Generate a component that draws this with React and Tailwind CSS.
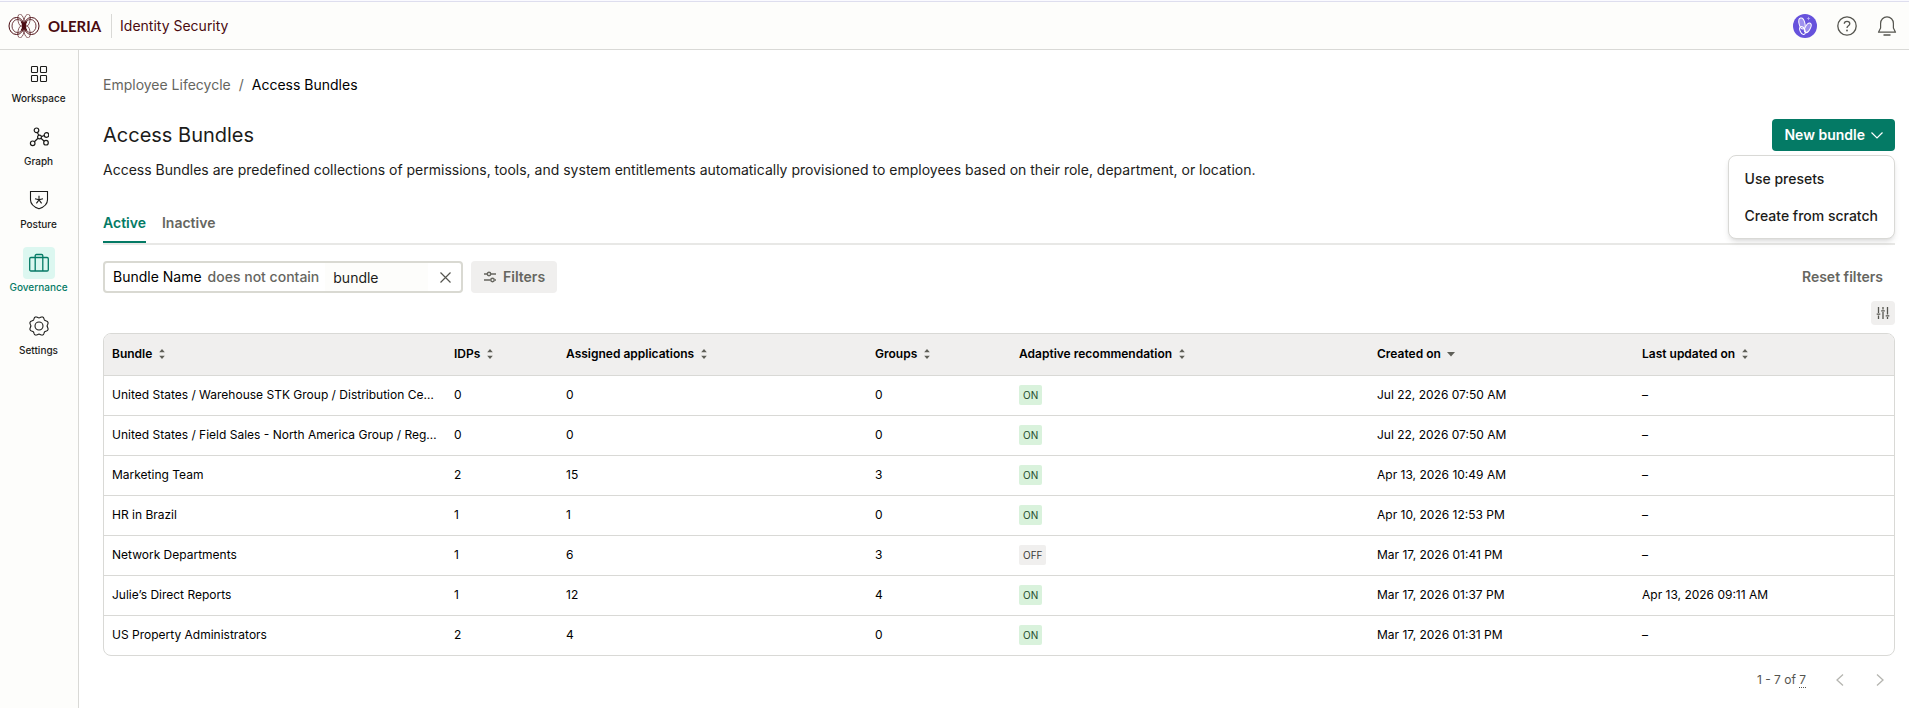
import React, { useState } from 'react';

const navItems = [
  { name: 'Workspace', icon: WorkspaceIcon },
  { name: 'Graph', icon: GraphIcon },
  { name: 'Posture', icon: PostureIcon },
  { name: 'Governance', icon: GovernanceIcon },
  { name: 'Settings', icon: SettingsIcon },
];

const columns = [
  { label: 'Bundle', width: 'w-[342px]' },
  { label: 'IDPs', width: 'w-[112px]' },
  { label: 'Assigned applications', width: 'w-[309px]' },
  { label: 'Groups', width: 'w-[144px]' },
  { label: 'Adaptive recommendation', width: 'w-[358px]' },
  { label: 'Created on', width: 'w-[265px]', sorted: true },
  { label: 'Last updated on', width: 'w-[260px]' },
];

const bundles = [
  { id: 1, name: 'United States / Warehouse STK Group / Distribution Ce…', idps: 0, apps: 0, groups: 0, adaptive: true, created: 'Jul 22, 2026 07:50 AM' },
  { id: 2, name: 'United States / Field Sales - North America Group / Reg…', idps: 0, apps: 0, groups: 0, adaptive: true, created: 'Jul 22, 2026 07:50 AM' },
  { id: 3, name: 'Marketing Team', idps: 2, apps: 15, groups: 3, adaptive: true, created: 'Apr 13, 2026 10:49 AM' },
  { id: 4, name: 'HR in Brazil', idps: 1, apps: 1, groups: 0, adaptive: true, created: 'Apr 10, 2026 12:53 PM' },
  { id: 5, name: 'Network Departments', idps: 1, apps: 6, groups: 3, adaptive: false, created: 'Mar 17, 2026 01:41 PM' },
  { id: 6, name: 'Julie’s Direct Reports', idps: 1, apps: 12, groups: 4, adaptive: true, created: 'Mar 17, 2026 01:37 PM', updated: 'Apr 13, 2026 09:11 AM' },
  { id: 7, name: 'US Property Administrators', idps: 2, apps: 4, groups: 0, adaptive: true, created: 'Mar 17, 2026 01:31 PM' },
];

// Gear outline with eight soft teeth
const gearPoints = Array.from({ length: 96 }, (_, i) => {
  const angle = (i / 96) * Math.PI * 2;
  const radius = 8.9 - 0.8 * Math.cos(angle * 8);
  return `${(10 + radius * Math.cos(angle)).toFixed(2)},${(10 + radius * Math.sin(angle)).toFixed(2)}`;
}).join(' ');

function WorkspaceIcon() {
  return (
    <svg className="h-5 w-5" viewBox="0 0 20 20" fill="none" stroke="currentColor" strokeWidth="1.1">
      <rect x="2.5" y="2.5" width="6" height="6" rx="0.8" />
      <rect x="11.5" y="2.5" width="6" height="6" rx="0.8" />
      <rect x="2.5" y="11.5" width="6" height="6" rx="0.8" />
      <rect x="11.5" y="11.5" width="6" height="6" rx="0.8" />
    </svg>
  );
}

function GraphIcon() {
  return (
    <svg className="h-5 w-5" viewBox="0 0 20 20" fill="none" stroke="currentColor" strokeWidth="1.2">
      <circle cx="7.5" cy="3.3" r="2.3" />
      <circle cx="17.5" cy="8" r="2.3" />
      <circle cx="17" cy="15.7" r="2.3" />
      <circle cx="3.7" cy="16.3" r="2.3" />
      <circle cx="10.5" cy="10" r="1.9" />
      <path d="M8.3 5.5l1.5 2.8M12.4 9.6l2.9-1.1M12 11.3l3.2 2.9M9 11.3l-3.6 3.4" />
    </svg>
  );
}

function PostureIcon() {
  return (
    <svg className="h-5 w-5" viewBox="0 0 20 20" fill="none" stroke="currentColor" strokeWidth="1.1">
      <path d="M1.5 1.5h17v8.3c0 4.2-3.5 7.3-8.5 9-5-1.7-8.5-4.8-8.5-9z" />
      <path d="M10 9.8V5.8M10 9.8l-4-1.1M10 9.8l4-1.1M10 9.8l-2.6 3.5M10 9.8l2.6 3.5" />
    </svg>
  );
}

function GovernanceIcon() {
  return (
    <svg className="h-5 w-5" viewBox="0 0 20 20" fill="none" stroke="currentColor" strokeWidth="1.3">
      <rect x="0.7" y="4.5" width="18.6" height="13.5" rx="1.2" />
      <path d="M6.2 18V2.7c0-.7.5-1.2 1.2-1.2h5.2c.7 0 1.2.5 1.2 1.2V18" />
    </svg>
  );
}

function SettingsIcon() {
  return (
    <svg className="h-5 w-5" viewBox="0 0 20 20" fill="none" stroke="currentColor" strokeWidth="1.1" strokeLinejoin="round">
      <circle cx="10" cy="10" r="4" />
      <polygon points={gearPoints} />
    </svg>
  );
}

const ButterflyLogo = () => (
  <svg className="h-6 w-8" viewBox="0 0 32 24" fill="none" stroke="#4a0a10" strokeWidth="1">
    <ellipse cx="8.5" cy="12" rx="7.5" ry="8.5" />
    <ellipse cx="23.500" cy="12" rx="7.5" ry="8.5" />
    <ellipse cx="9.5" cy="12" rx="5.5" ry="6.5" strokeWidth="0.8" />
    <ellipse cx="22.5" cy="12" rx="5.5" ry="6.5" strokeWidth="0.8" />
    <ellipse cx="13" cy="6.5" rx="3" ry="6.5" transform="rotate(-12 13 6.500)" strokeWidth="0.6" />
    <ellipse cx="19" cy="6.5" rx="3" ry="6.5" transform="rotate(12 19 6.500)" strokeWidth="0.6" />
    <ellipse cx="13" cy="17.5" rx="3" ry="6.5" transform="rotate(12 13 17.500)" strokeWidth="0.6" />
    <ellipse cx="19" cy="17.5" rx="3" ry="6.5" transform="rotate(-12 19 17.500)" strokeWidth="0.6" />
    <path d="M13.5 7.5c2 3 2 6 0 9M18.5 7.5c-2 3-2 6 0 9M16 8.5v7" strokeWidth="1.6" />
  </svg>
);

const AssistantIcon = () => (
  <svg className="h-6 w-6" viewBox="0 0 24 24" fill="none" stroke="#fff" strokeWidth="1">
    <circle cx="12" cy="12" r="12" fill="#6652dc" stroke="none" />
    <ellipse cx="9" cy="9.5" rx="2.9" ry="5.7" transform="rotate(-14 9 9.5)" fill="#9d90ee" />
    <ellipse cx="14.8" cy="13.8" rx="2.5" ry="5.2" transform="rotate(28 14.8 13.8)" fill="#9d90ee" />
    <ellipse cx="9.5" cy="16.5" rx="2.4" ry="4.2" transform="rotate(-24 9.5 16.5)" />
    <path d="M15.5 2.5l.6 1.4 1.4.6-1.4.6-.6 1.4-.6-1.4-1.4-.6 1.4-.6z" fill="#bdb3f5" stroke="none" />
  </svg>
);

const HelpIcon = () => (
  <svg className="h-5 w-5" viewBox="0 0 20 20" fill="none" stroke="currentColor" strokeWidth="1.3">
    <circle cx="10" cy="10" r="9.2" />
    <path d="M7.3 7.8c0-1.5 1.1-2.5 2.7-2.5s2.8 1 2.8 2.4c0 2-2.8 2-2.8 4.2" />
    <circle cx="10" cy="14.5" r="0.9" fill="currentColor" stroke="none" />
  </svg>
);

const BellIcon = () => (
  <svg className="h-5 w-5" viewBox="0 0 20 20" fill="none" stroke="currentColor" strokeWidth="1.2">
    <path d="M1.5 16.2 3.6 12V7.5C3.6 3.7 6.4.9 10 .9s6.4 2.8 6.4 6.6V12l2.1 4.2z" strokeLinejoin="round" />
    <path d="M6.5 19h7" strokeWidth="1.5" />
  </svg>
);

const SortIcon = ({ sorted }) =>
  sorted ? (
    <svg className="h-3 w-2" viewBox="0 0 8 12" fill="#5f5f58">
      <path d="M0 4h8L4 8.5z" />
    </svg>
  ) : (
    <svg className="h-3 w-2" viewBox="0 0 8 12" fill="#5f5f58">
      <path d="M4 1l2.8 3.2H1.2zM4 11l2.8-3.2H1.2z" />
    </svg>
  );

const Header = () => (
  <header className="flex h-12 items-center justify-between border-b border-[#d9d9d6] bg-[#fdfdfb] pl-2 pr-3">
    <div className="flex items-center">
      <a href="#" className="flex items-center gap-2 text-[#4a0a10]">
        <ButterflyLogo />
        <span className="font-['Lato'] text-[15px] font-bold leading-5">OLERIA</span>
      </a>
      <span className="ml-[10px] h-6 border-l border-[#d9d9d6]" />
      <span className="ml-2 text-[14px] leading-5 text-[#4a0a10]">Identity Security</span>
    </div>
    <div className="flex items-center gap-5 text-[#55554f]">
      <button aria-label="Assistant"><AssistantIcon /></button>
      <button aria-label="Help"><HelpIcon /></button>
      <button aria-label="Notifications"><BellIcon /></button>
    </div>
  </header>
);

const Sidebar = () => (
  <nav className="flex w-[79px] shrink-0 flex-col gap-[15px] border-r border-[#d9d9d6] bg-[#fdfdfb] pr-px pt-2">
    {navItems.map(({ name, icon: Icon }) => {
      const active = name === 'Governance';
      return (
        <a key={name} href="#" className={`flex flex-col items-center text-[10px] font-medium leading-4 ${active ? 'text-[#047a65]' : 'text-[#1c1c1a]'}`}>
          <span className={`flex h-8 w-8 items-center justify-center rounded ${active ? 'bg-[#dcf7f0]' : ''}`}>
            <Icon />
          </span>
          {name}
        </a>
      );
    })}
  </nav>
);

const NewBundleMenu = () => {
  const [open, setOpen] = useState(true);
  return (
    <div className="relative">
      <button
        onClick={() => setOpen(!open)}
        className="flex h-8 items-center gap-[6px] rounded bg-[#047a65] px-3 text-[14px] font-semibold leading-5 text-white"
      >
        New bundle
        <svg className="h-3 w-3" viewBox="0 0 12 12" fill="none" stroke="currentColor" strokeWidth="1.2">
          <path d="M.5 3.5 6 9l5.5-5.5" />
        </svg>
      </button>
      {open && (
        <div className="absolute right-0 top-9 z-10 flex flex-col rounded-lg border border-[#d9d9d6] bg-white py-1 shadow-md">
          <button className="h-[37px] whitespace-nowrap px-4 text-left text-[14px] font-medium leading-5">Use presets</button>
          <button className="h-[37px] whitespace-nowrap px-4 text-left text-[14px] font-medium leading-5">Create from scratch</button>
        </div>
      )}
    </div>
  );
};

const FilterBar = () => {
  const [value, setValue] = useState('bundle');
  return (
    <div className="mt-4 flex items-center justify-between">
      <div className="flex gap-2">
        <div className="flex h-8 w-[360px] items-center rounded border-2 border-[#d9d9d2] pl-2 text-[14px] leading-5">
          <label htmlFor="bundle-name" className="shrink-0 text-black">Bundle Name</label>
          <span className="ml-[6px] shrink-0 font-medium text-[#66665f]">does not contain</span>
          <input
            id="bundle-name"
            value={value}
            onChange={(e) => setValue(e.target.value)}
            className="ml-[6px] h-full min-w-0 flex-1 bg-[#fdfdfb] px-2 outline-none"
          />
          <button aria-label="Remove filter" onClick={() => setValue('')} className="pl-3 pr-[10px] text-[#55554f]">
            <svg className="h-[11px] w-[11px]" viewBox="0 0 11 11" fill="none" stroke="currentColor" strokeWidth="1.2">
              <path d="M.5.5l10 10M10.5.5l-10 10" />
            </svg>
          </button>
        </div>
        <button className="flex h-8 items-center gap-[6px] rounded bg-[#f0efee] px-3 text-[14px] font-semibold leading-5 text-[#66665f]">
          <svg className="h-3 w-[14px]" viewBox="0 0 14 12" fill="none" stroke="currentColor" strokeWidth="1.4">
            <path d="M1 3h3M8 3h5M1 9h6.500M11.500 9H13" />
            <circle cx="6" cy="3" r="1.7" />
            <circle cx="9.5" cy="9" r="1.7" />
          </svg>
          Filters
        </button>
      </div>
      <button className="px-3 text-[14px] font-semibold leading-5 text-[#66665f]">Reset filters</button>
    </div>
  );
};

const BundleTable = () => (
  <div className="mt-2 overflow-hidden rounded-lg border border-[#d9d9d6]">
    <table className="w-full table-fixed text-left text-[12px] leading-4 text-black">
      <thead>
        <tr className="h-[41px] border-b border-[#d9d9d6] bg-[#f0efee]">
          {columns.map((column) => (
            <th key={column.label} className={`px-2 py-0 font-semibold ${column.width}`}>
              <button className="flex items-center gap-[6px] whitespace-nowrap">
                {column.label}
                <SortIcon sorted={column.sorted} />
              </button>
            </th>
          ))}
        </tr>
      </thead>
      <tbody>
        {bundles.map((bundle) => (
          <tr key={bundle.id} className="h-10 border-b border-[#d9d9d6] last:border-b-0">
            <td className="whitespace-nowrap py-0 pl-2">{bundle.name}</td>
            <td className="px-2 py-0">{bundle.idps}</td>
            <td className="px-2 py-0">{bundle.apps}</td>
            <td className="px-2 py-0">{bundle.groups}</td>
            <td className="px-2 py-0">
              <span className={`inline-block rounded-xs px-1 text-[10px] leading-5 ${bundle.adaptive ? 'bg-[#d9f2dc] text-[#234a2b]' : 'bg-[#f0efee] text-[#3a3a36]'}`}>
                {bundle.adaptive ? 'ON' : 'OFF'}
              </span>
            </td>
            <td className="px-2 py-0">{bundle.created}</td>
            <td className="px-2 py-0">{bundle.updated || '–'}</td>
          </tr>
        ))}
      </tbody>
    </table>
  </div>
);

const App = () => {
  const [tab, setTab] = useState('Active');

  return (
    <div className="flex min-h-screen flex-col bg-white font-['Inter',sans-serif] text-[#1c1c1a]">
      <div className="h-[2px] shrink-0 border-b border-[#dedeee] bg-[#fafaff]" />
      <Header />
      <div className="flex flex-1">
        <Sidebar />
        <main className="min-w-0 flex-1 pl-6 pr-[14px] pt-[25px]">
          <div className="flex gap-2 text-[14px] leading-5">
            <a href="#" className="text-[#66665f]">Employee Lifecycle</a>
            <span className="text-[#66665f]">/</span>
            <span className="text-black">Access Bundles</span>
          </div>
          <div className="mt-6 flex items-center justify-between">
            <h1 className="text-[20px] leading-7">Access Bundles</h1>
            <NewBundleMenu />
          </div>
          <p className="mt-[9px] text-[14px] leading-5">
            Access Bundles are predefined collections of permissions, tools, and system entitlements automatically provisioned to employees based on their role, department, or location.
          </p>
          <div className="mt-[33px] flex gap-4 border-b-2 border-[#e8e8e6]">
            {['Active', 'Inactive'].map((name) => (
              <button
                key={name}
                onClick={() => setTab(name)}
                className={`border-b-2 pb-2 text-[14px] font-semibold leading-5 ${tab === name ? 'border-[#047a65] text-[#047a65]' : 'border-transparent text-[#66665f]'}`}
              >
                {name}
              </button>
            ))}
          </div>
          <FilterBar />
          <div className="mt-2 flex justify-end">
            <button aria-label="Table columns" className="flex h-6 w-6 items-center justify-center rounded bg-[#f0efee] text-[#55554f]">
              <svg className="h-3 w-[14px]" viewBox="0 0 14 12" fill="none" stroke="currentColor" strokeWidth="1.3">
                <path d="M2.5 0v6M2.5 8.5V12M7 0v2.5M7 5v7M11.5 0v7.5M11.5 10v2M.7 7.2h3.6M5.2 3.8h3.6M9.7 8.8h3.6" />
              </svg>
            </button>
          </div>
          <BundleTable />
          <div className="mt-3 flex items-center justify-end pr-[5px] text-[12px] leading-4 text-[#55554f]">
            <span>1 - 7 of <span className="border-b border-dotted border-[#55554f]">7</span></span>
            <button aria-label="Previous page" className="ml-6 flex h-6 w-5 items-center justify-center text-[#b5b5b0]">
              <svg className="h-3 w-2" viewBox="0 0 8 12" fill="none" stroke="currentColor" strokeWidth="1.3"><path d="M7 .5 1 6l6 5.5" /></svg>
            </button>
            <button aria-label="Next page" className="ml-5 flex h-6 w-5 items-center justify-center text-[#b5b5b0]">
              <svg className="h-3 w-2" viewBox="0 0 8 12" fill="none" stroke="currentColor" strokeWidth="1.3"><path d="M1 .5 7 6l-6 5.5" /></svg>
            </button>
          </div>
        </main>
      </div>
    </div>
  );
};

export default App;
